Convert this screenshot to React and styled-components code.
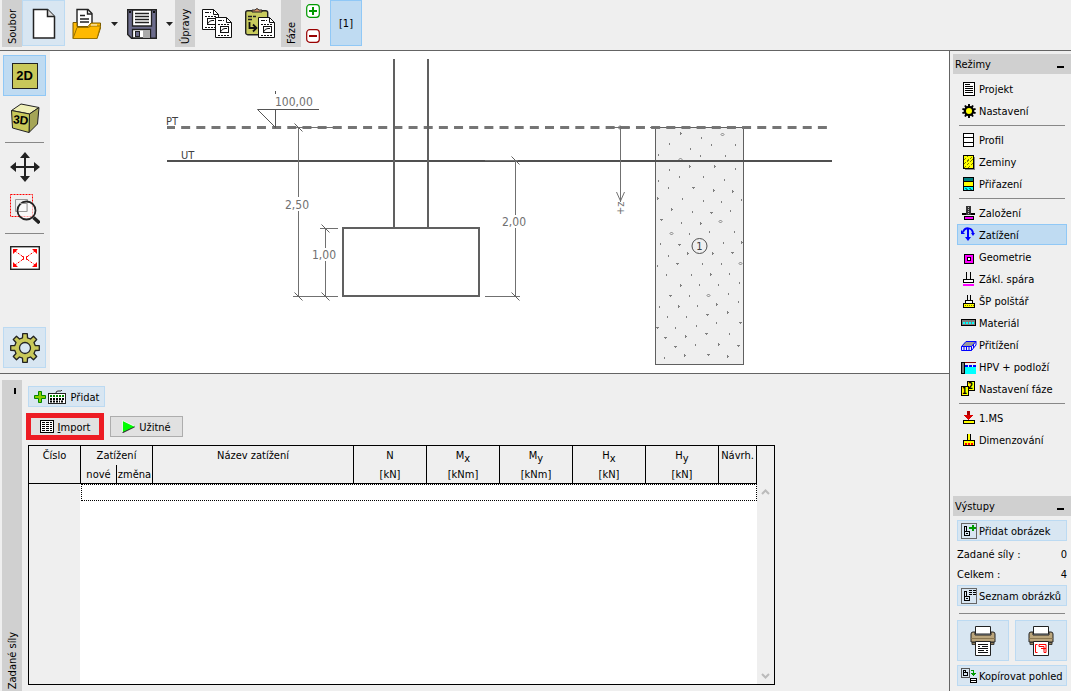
import { useState } from "react";
import styled, { createGlobalStyle, css } from "styled-components";

const GlobalStyle = createGlobalStyle`
  * {
    box-sizing: border-box;
  }
  body {
    margin: 0;
    background: #efefef;
    color: #000;
    font-family: "DejaVu Sans Condensed", "DejaVu Sans", sans-serif;
    font-size: 11px;
    line-height: 14px;
  }
  button {
    font: inherit;
    color: inherit;
    padding: 0;
    margin: 0;
    border: 1px solid transparent;
    background: transparent;
    cursor: pointer;
  }
  svg {
    display: block;
    flex: none;
  }
`;

/* ---------- icons ---------- */

const gearPoints = (cx, cy, outer, inner, teeth) => {
  const pts = [];
  const step = (Math.PI * 2) / teeth;
  for (let i = 0; i < teeth; i++) {
    const a = i * step - Math.PI / 2;
    [
      [-0.3, inner],
      [-0.2, outer],
      [0.2, outer],
      [0.3, inner],
    ].forEach(([k, r]) => {
      pts.push(
        `${(cx + r * Math.cos(a + k * step)).toFixed(1)},${(cy + r * Math.sin(a + k * step)).toFixed(1)}`
      );
    });
  }
  return pts.join(" ");
};

const NewIcon = () => (
  <svg width="30" height="34" viewBox="0 0 30 34">
    <path d="M4.500 2.500h14l7 7v21.500h-21z" fill="#fff" stroke="#222" strokeWidth="1.500" />
    <path d="M18.500 2.500v7h7" fill="#ddd" stroke="#222" strokeWidth="1.500" />
  </svg>
);

const OpenIcon = () => (
  <svg width="30" height="34" viewBox="0 0 30 34">
    <path d="M5 21V2.500h11l4 4V21z" fill="#fff" stroke="#222" strokeWidth="1.400" />
    <path d="M15.500 2.500v4.500h4.500M8 8.500h5M8 12h9M8 15h9" fill="none" stroke="#222" strokeWidth="1.400" />
    <path d="M1 31.500V15.500H5V19.500h11l3-3.500h9.500v5L25 31.500z" fill="#ffb900" stroke="#7a5b00" />
    <path d="M1 31.500L5 20.500h11l3-1.500h9.500L25 31.500z" fill="#ffb900" stroke="#9a7300" />
    <path d="M19 18h6" stroke="#fff" />
  </svg>
);

const SaveIcon = () => (
  <svg width="30" height="34" viewBox="0 0 30 34">
    <path d="M.700 2.700h28.600v28.600H4.500L.700 27.500z" fill="#6c6c8c" stroke="#222" strokeWidth="1.400" />
    <path d="M5.500 3v16h19V3z" fill="#fff" stroke="#222" strokeWidth="1.300" />
    <path d="M8 6.500h14M8 9.500h14M8 12.500h14M8 15.500h14" stroke="#222" strokeWidth="1.400" />
    <path d="M5.500 31v-8.500h18V31z" fill="#fff" stroke="#222" strokeWidth="1.300" />
    <rect x="16" y="23" width="7" height="8" fill="#aaa" />
    <rect x="8.500" y="24.500" width="4" height="5" fill="#6c6c8c" stroke="#222" />
    <path d="M2 5h2M26 5h2" stroke="#111" strokeWidth="2" />
  </svg>
);

const Sheet = ({ x, y }) => (
  <g transform={`translate(${x} ${y})`}>
    <path d="M.500.500h11l5 5v15h-16z" fill="#fff" stroke="#111" />
    <path d="M11.500.500v5h5" fill="none" stroke="#111" />
    <path d="M3 3.500h6" stroke="#111" strokeDasharray="4 1" />
    <path d="M3 7.500h11M3 18.500h11" stroke="#111" strokeDasharray="2 1" />
    <rect x="5.500" y="9.500" width="8" height="6" fill="#fff" stroke="#111" />
    <path d="M6 14.500q1-3 4-3h2" fill="none" stroke="#111" />
  </g>
);

const CopyIcon = () => (
  <svg width="30" height="34" viewBox="0 0 30 34">
    <Sheet x={0} y={2} />
    <Sheet x={13} y={10} />
  </svg>
);

const PasteIcon = () => (
  <svg width="30" height="34" viewBox="0 0 30 34">
    <rect x=".700" y="3.700" width="22" height="24" rx="2" fill="#c8cb5e" stroke="#222" strokeWidth="1.400" />
    <path d="M7 5V3h3q2-3 4 0h3v2z" fill="#d99163" stroke="#222" />
    <path d="M3 9.500h8M3 12.500h5" stroke="#222" strokeWidth="1.300" strokeDasharray="4 1" />
    <path d="M4.500 15v6h6M8 17.500l3.500 3.500L8 24.500" fill="none" stroke="#111" strokeWidth="1.800" />
    <Sheet x={13} y={10} />
  </svg>
);

const SignIcon = ({ color, plus }) => (
  <svg width="14" height="14" viewBox="0 0 14 14">
    <rect x=".700" y=".700" width="12.600" height="12.600" rx="3" fill="#fff" stroke={color} strokeWidth="1.200" />
    <path d={plus ? "M3 7h8M7 3v8" : "M3 7h8"} stroke={color} strokeWidth="2" />
  </svg>
);

const CaretIcon = () => (
  <svg width="7" height="4" viewBox="0 0 7 4">
    <path d="M0 0h7L3.500 4z" fill="#222" />
  </svg>
);

const CubeIcon = () => (
  <svg width="30" height="30" viewBox="0 0 30 30">
    <path d="M1.500 7.500L11 1l18 3.500L19.500 11z" fill="#f0f0b8" stroke="#222" />
    <path d="M19.500 11L29 4.500 27.500 21 19 29.500z" fill="#a5a556" stroke="#222" />
    <path d="M1.500 7.500l18 3.500-.5 18.500L2.500 25z" fill="#c8c85a" stroke="#222" />
    <text x="3" y="21" fontSize="12" fontWeight="bold" fontFamily="Liberation Sans, sans-serif" transform="rotate(6 10 18)">3D</text>
  </svg>
);

const MoveIcon = () => (
  <svg width="30" height="30" viewBox="0 0 30 30">
    <path d="M15 3v24M3 15h24" stroke="#222" strokeWidth="2" />
    <path d="M15 0l5 6H10zM15 30l5-6H10zM0 15l6-5v10zM30 15l-6-5v10z" fill="#222" />
  </svg>
);

const ZoomIcon = () => (
  <svg width="30" height="30" viewBox="0 0 30 30">
    <rect x=".500" y=".500" width="22" height="22" fill="none" stroke="#f00" strokeDasharray="2 1" />
    <path d="M5.500 5.500h12v12h-12z" fill="none" stroke="#999" />
    <circle cx="16.500" cy="16.500" r="9" fill="#fff" fillOpacity=".6" stroke="#222" strokeWidth="1.800" />
    <path d="M9 9.500h8v8H9" fill="none" stroke="#999" />
    <path d="M23.500 23.500l6 5.500" stroke="#222" strokeWidth="3.500" />
  </svg>
);

const FitIcon = () => (
  <svg width="30" height="24" viewBox="0 0 30 24">
    <rect x=".700" y=".700" width="28.600" height="22.600" fill="#fff" stroke="#222" strokeWidth="1.400" />
    <path d="M5 5l7 5M25 5l-7 5M5 19l7-5M25 19l-7-5" stroke="#f00" strokeDasharray="2 1.500" />
    <path d="M3 3h5L3 8zM27 3v5l-5-5zM3 21v-5l5 5zM27 21h-5l5-5z" fill="#f00" />
    <path d="M12 10.500h1.500v3H12M18 10.500h-1.500v3H18" fill="none" stroke="#f00" />
  </svg>
);

const GearIcon = () => (
  <svg width="30" height="30" viewBox="0 0 30 30">
    <polygon points={gearPoints(15, 15, 14.5, 10.5, 8)} fill="#c8c85a" stroke="#222" strokeWidth="1.3" strokeLinejoin="round" />
    <circle cx="15" cy="15" r="5.500" fill="#d8e6f2" stroke="#222" strokeWidth="1.300" />
  </svg>
);

// small 17x17 pictures for the mode list
const modeIcons = {
  project: (
    <>
      <rect x="3.500" y="2.500" width="11" height="13" fill="#fff" stroke="#000" />
      <path d="M5 4.500h5M5 6.500h8M5 8.500h8M5 10.500h8M5 12.500h8" stroke="#000" />
    </>
  ),
  settings: (
    <g shapeRendering="auto">
      <polygon points={gearPoints(9, 9, 7, 5.2, 10)} fill="#000" />
      <circle cx="9" cy="9" r="3" fill="#ff0" />
    </g>
  ),
  profile: (
    <>
      <rect x="3.500" y="2.500" width="10" height="13" fill="#fff" stroke="#000" />
      <path d="M3 6.500h11M3 11.500h11" stroke="#000" />
    </>
  ),
  soils: (
    <>
      <path d="M14.500 4v12.500H5" fill="none" stroke="#888" />
      <rect x="3.500" y="2.500" width="10" height="13" fill="#ff0" stroke="#000" />
      <path d="M4 7l4-4M4 11l9-8M4 15l9-9M8 15l5-5" stroke="#7a7a00" strokeDasharray="3 1" />
    </>
  ),
  assign: (
    <>
      <rect x="3.500" y="2.500" width="10" height="4" fill="#008080" stroke="#000" />
      <rect x="3.500" y="6.500" width="10" height="5" fill="#ff0" stroke="#000" />
      <rect x="3.500" y="11.500" width="10" height="4" fill="#0ff" stroke="#000" />
      <path d="M5 13l3 2M9 13l3 2" stroke="#088" />
    </>
  ),
  foundation: (
    <>
      <rect x="6" y="2" width="5" height="9" fill="#333" />
      <path d="M8.500 3v8" stroke="#bbb" strokeDasharray="1 1" />
      <path d="M2 10h4M11 10h4" stroke="#000" strokeWidth="2" />
      <rect x="4.500" y="12.500" width="9" height="3" fill="#f0f" stroke="#000" />
    </>
  ),
  load: (
    <g shapeRendering="auto" fill="none" stroke="#00f" strokeWidth="2">
      <path d="M3 6C5 1 12 1 13 7" />
      <path d="M8 2v11" />
      <path d="M1 4v4h4zM11 7h4l-2 3zM5 11h6l-3 4z" fill="#00f" stroke="none" />
    </g>
  ),
  geometry: (
    <>
      <rect x="4.500" y="6.500" width="9" height="9" fill="#f0f" stroke="#000" />
      <rect x="7.500" y="9.500" width="3" height="3" fill="#fff" stroke="#000" />
    </>
  ),
  base: (
    <>
      <path d="M6.500 2v8M10.500 2v8" stroke="#000" />
      <rect x="3.500" y="9.500" width="10" height="3" fill="#fff" stroke="#000" />
      <rect x="3" y="14" width="11" height="2" fill="#f0f" />
    </>
  ),
  cushion: (
    <>
      <path d="M7.500 3v5M10.500 3v5" stroke="#000" />
      <rect x="5.500" y="8.500" width="7" height="3" fill="#fff" stroke="#000" />
      <rect x="3.500" y="11.500" width="11" height="4" fill="#ff0" stroke="#000" />
      <path d="M5 13.500h9" stroke="#770" strokeDasharray="1 1" />
    </>
  ),
  material: (
    <>
      <rect x="1.500" y="5.500" width="14" height="6" fill="#808080" stroke="#000" />
      <path d="M3 9h11" stroke="#0ff" strokeWidth="2" strokeDasharray="2 1" />
    </>
  ),
  surcharge: (
    <g shapeRendering="auto" stroke="#00f">
      <path d="M1.500 10.500L6 5.500h10L11.500 10.500z" fill="#999" />
      <path d="M1.500 10.500v4h10v-4M11.500 14.500L16 9V5.500M4 10.500v4M6.500 10.500v4M9 10.500v4M13.500 8v4" fill="none" />
    </g>
  ),
  water: (
    <>
      <rect x="5" y="9" width="11" height="7" fill="#0ff" />
      <path d="M1 4.500h15" stroke="#800000" />
      <rect x="1.500" y="4.500" width="3" height="11" fill="#777" stroke="#000" />
      <path d="M5 8h11" stroke="#00f" strokeWidth="2" strokeDasharray="3 1" />
    </>
  ),
  stage: (
    <>
      <rect x="7.500" y="1.500" width="7" height="9" fill="#ff0" stroke="#000" />
      <rect x="1.500" y="6.500" width="7" height="9" fill="#ff0" stroke="#000" />
      <text x="2" y="14" fontSize="8" fontWeight="bold">1</text>
      <text x="8" y="9" fontSize="8" fontWeight="bold">2</text>
    </>
  ),
  capacity: (
    <>
      <path d="M8.500 2v6" stroke="#a00" strokeWidth="3" />
      <path d="M4 6h9L8.500 11z" fill="#d00" />
      <rect x="3.500" y="11.500" width="11" height="3" fill="#ff0" stroke="#000" />
    </>
  ),
  design: (
    <>
      <path d="M7.500 3v7M10.500 3v7" stroke="#000" />
      <rect x="8" y="3" width="2" height="7" fill="#ff0" />
      <rect x="3.500" y="9.500" width="11" height="5" fill="#ff0" stroke="#000" />
      <path d="M5 12.500h9" stroke="#f00" strokeWidth="2" strokeDasharray="2 1" />
    </>
  ),
};

const ModeIcon = ({ name }) => (
  <svg width="17" height="17" viewBox="0 0 17 17" shapeRendering="crispEdges">
    {modeIcons[name]}
  </svg>
);

const PictureIcon = ({ kind }) => (
  <svg width="17" height="17" viewBox="0 0 17 17" shapeRendering="crispEdges">
    {kind === "copy" ? (
      <>
        <rect x="1.500" y="1.500" width="8" height="9" fill="none" stroke="#555" />
        <path d="M3.500 3.500h2v2h2v3h-4zM3.500 5.500h2" fill="none" stroke="#000" />
        <path d="M11 3.500h2.500V8" fill="none" stroke="#090" />
        <path d="M11 6h5l-2.500 3z" fill="#090" />
        <rect x="10.500" y="11.500" width="6" height="4" fill="#fff" stroke="#000" />
        <path d="M10 13.500h6" stroke="#000" />
      </>
    ) : (
      <>
        <rect x="1.500" y="1.500" width="15" height="15" fill="none" stroke="#666" />
        <path d="M4.500 4.500h2v5h-2zM4.500 9.500h5v4h-5zM6 11.500h2" fill="none" stroke="#000" />
        {kind === "add" ? (
          <path d="M9 6h7M12.500 3v6" stroke="#090" strokeWidth="2" />
        ) : (
          <path d="M9 3.500h3m1 0h3M9 5.500h3m1 0h3M9 7.500h3m1 0h3" stroke="#000" />
        )}
      </>
    )}
  </svg>
);

const PrinterIcon = ({ drawing }) => (
  <svg width="26" height="32" viewBox="0 0 26 32">
    <path d="M5.500 9V1.500h15V9z" fill="#fff" stroke="#222" />
    <path d="M1 9q0-2 2-2h2v3h16V7h2q2 0 2 2v8H1z" fill="#baa57c" stroke="#222" />
    <path d="M1 13.500h24" stroke="#8a7650" />
    <path d="M2 17.500h22v2H2z" fill="#8f7c57" stroke="#222" strokeWidth=".8" />
    <path d="M5.500 16.500h15v14h-15z" fill="#fff" stroke="#222" />
    {drawing ? (
      <path d="M9.500 19.500h-2v8h2M11 19.500h7v8h-2v-4M11 19.500v2h5v3M13 23.500h5" fill="none" stroke="#f00" />
    ) : (
      <path d="M8 19.500h10M8 21.500h2m2 0h6M8 23.500h10M8 25.500h6m2 0h2M8 27.500h10" stroke="#111" />
    )}
  </svg>
);

const AddLoadIcon = () => (
  <svg width="33" height="17" viewBox="0 0 33 17">
    <path d="M4.500 3.500h3v4h4v3h-4v4h-3v-4h-4v-3h4z" fill="#8c0" stroke="#080" />
    <rect x="14.500" y="5.500" width="17" height="10" fill="#fff" stroke="#222" />
    <path d="M16 8h14" stroke="#080" strokeWidth="2" strokeDasharray="2 1" />
    <path d="M16 11h14M16 13.500h2m1 0h7m1 0h3" stroke="#000" strokeWidth="2" strokeDasharray="2 1" />
    <path d="M22 5q0-2 2-2h3l1-1" fill="none" stroke="#333" />
  </svg>
);

const GridIcon = () => (
  <svg width="14" height="13" viewBox="0 0 14 13" shapeRendering="crispEdges">
    <rect x=".500" y=".500" width="13" height="12" fill="#fff" stroke="#000" />
    <path d="M2 2.500h10M2 4.500h10M2 6.500h10M2 8.500h10M2 10.500h10" stroke="#000" strokeDasharray="3 1" />
  </svg>
);

const PlayIcon = () => (
  <svg width="13" height="13" viewBox="0 0 13 13">
    <path d="M.500 12.500L12.500 6.500" stroke="#333" strokeWidth="1.500" />
    <path d="M.500.500v11.500L12.500 6.500z" fill="#0f0" />
    <path d="M.500 12V.500L12 6" fill="none" stroke="#fff" strokeWidth=".8" />
  </svg>
);

const ScrollArrow = ({ down }) => (
  <svg width="9" height="6" viewBox="0 0 9 6">
    <path d={down ? "M1 1l3.500 3.500L8 1" : "M1 5l3.500-3.500L8 5"} fill="none" stroke="#bbb" strokeWidth="2" />
  </svg>
);

/* ---------- foundation drawing ---------- */

const ticks = [
  [701, 138], [669, 144], [711, 145], [735, 145], [690, 149], [658, 155], [700, 156], [725, 156],
  [669, 170], [735, 169], [679, 177], [703, 177], [724, 180], [658, 181], [668, 188], [682, 199],
  [703, 201], [721, 202], [741, 200], [692, 212], [730, 211], [681, 223], [689, 234], [709, 232],
  [734, 232], [660, 244], [723, 243], [668, 256], [657, 266], [702, 264], [721, 264], [666, 275],
  [691, 275], [729, 274], [699, 285], [718, 285], [739, 283], [689, 296], [728, 294], [738, 302],
  [659, 307], [697, 306], [667, 317], [686, 317], [716, 323], [675, 328], [696, 326], [729, 334],
  [695, 345], [664, 358],
];
const rights = [
  [681, 133], [690, 166], [715, 166], [714, 190], [733, 191], [658, 198], [672, 209], [701, 223],
  [688, 253], [713, 253], [742, 242], [711, 274], [681, 285], [717, 304], [679, 306], [728, 312],
  [686, 336], [719, 344], [685, 355], [728, 356],
];
const downs = [
  [693, 188], [711, 213], [661, 220], [679, 245], [732, 253], [677, 264], [670, 296], [707, 315],
  [740, 323], [657, 328], [706, 334], [665, 338], [675, 347], [738, 346], [708, 355],
];
const diamonds = [[722, 134], [680, 159], [720, 221], [671, 233], [740, 263], [708, 295]];

const Canvas = styled.svg`
  width: 100%;
  height: 100%;
  background: #fff;
  font-family: "DejaVu Sans Condensed", "DejaVu Sans", sans-serif;
  font-size: 12px;
`;

const Slash = ({ x, y }) => <path d={`M${x - 4} ${y - 4}l8 8`} stroke="#606060" />;

const FoundationDrawing = () => (
  <Canvas viewBox="50 51 899 322" preserveAspectRatio="xMinYMin meet" role="img" aria-label="Základ 2D">
    <rect x="655.500" y="127.500" width="88" height="237" fill="#efefef" stroke="#606060" />
    <g stroke="#808080" fill="none">
      {ticks.map(([x, y]) => (
        <path key={`${x}-${y}`} d={`M${x + 0.5} ${y - 1}v2`} />
      ))}
      {rights.map(([x, y]) => (
        <path key={`${x}-${y}`} d={`M${x - 0.5} ${y - 1}v3M${x} ${y + 0.5}h1`} />
      ))}
      {downs.map(([x, y]) => (
        <path key={`${x}-${y}`} d={`M${x - 1} ${y - 0.5}h3M${x + 0.5} ${y}v1`} />
      ))}
      {diamonds.map(([x, y]) => (
        <path key={`${x}-${y}`} d={`M${x + 0.5} ${y - 1}l1.500 1.500-1.500 1.500-1.500-1.500z`} />
      ))}
    </g>

    {/* terrain lines */}
    <path d="M167 127.500h660" stroke="#757575" strokeWidth="3" strokeDasharray="9 6.160" strokeDashoffset="1" />
    <path d="M167 161h665" stroke="#505050" strokeWidth="2" />

    {/* footing and column */}
    <path d="M394 59v168M428 59v168" stroke="#606060" strokeWidth="2" />
    <rect x="343" y="228" width="136" height="68" fill="#fff" stroke="#606060" strokeWidth="2" />

    <g stroke="#707070" fill="none">
      <path d="M298.500 127v70M298.500 211v86M293 127.500h40M293 296.500h45" />
      <path d="M325.500 228v20M325.500 261v36M320 228.500h18" />
      <path d="M515.500 160v55M515.500 228v69M485 160.500h33M485 296.500h35" />
      <path d="M620.500 126v76M616.500 192l4 9 4-9M610 127.500h20M650 127.500h8" />
      <circle cx="620" cy="127.500" r="1.500" />
    </g>
    <Slash x={298.5} y={127.500} />
    <Slash x={298.5} y={296.500} />
    <Slash x={325.5} y={228.500} />
    <Slash x={325.5} y={296.500} />
    <Slash x={515.5} y={160.500} />
    <Slash x={515.5} y={296.500} />
    <path d="M257.500 109.500H319M257.500 109.500l18 18v-18M275.500 91v3" stroke="#555" fill="none" />

    <g fill="#707070">
      <text x="275" y="106">100,00</text>
      <text x="285" y="209">2,50</text>
      <text x="312" y="259">1,00</text>
      <text x="502" y="226">2,00</text>
      <text x="166" y="125" fontSize="11" fill="#404040">PT</text>
      <text x="181" y="159" fontSize="11" fill="#404040">UT</text>
      <text transform="translate(624 215) rotate(-90)" fontSize="11">+z</text>
    </g>
    <circle cx="699.500" cy="246" r="7.500" fill="#efefef" stroke="#505050" />
    <text x="699.500" y="250" fontSize="11" textAnchor="middle" fill="#404040">1</text>
  </Canvas>
);

/* ---------- layout ---------- */

const Window = styled.div`
  display: grid;
  grid-template-rows: 51px minmax(0, 1fr);
  height: 100vh;
  overflow: hidden;
`;

const Toolbar = styled.header`
  display: flex;
  align-items: flex-start;
  padding-left: 2px;
  border-bottom: 1px solid #646464;
`;

const verticalText = css`
  width: 20px;
  line-height: 22px;
  writing-mode: vertical-rl;
  transform: rotate(180deg);
`;

const GroupLabel = styled.div`
  ${verticalText}
  height: 47px;
  padding-top: 3px;
  background: #d0d0d0;
`;

const ToolButton = styled.button`
  display: flex;
  align-items: center;
  justify-content: center;
  width: ${(p) => p.$width || 43}px;
  height: 46px;
  padding-top: 2px;
  ${(p) => p.$hot && "background: #d8e6f2; border-color: #bcdaf2;"}
  ${(p) => p.$active && "background: #bfdbf2; border-color: #90c8f6;"}
`;

const StageButtons = styled.div`
  display: flex;
  flex-direction: column;
  gap: 9px;
  width: 29px;
  padding: 3px 4px;

  button {
    width: 16px;
    height: 16px;
  }
`;

const Body = styled.div`
  display: grid;
  grid-template-columns: minmax(0, 1fr) 122px;
  min-height: 0;
`;

const Workspace = styled.main`
  display: grid;
  grid-template-rows: minmax(0, 1fr) 318px;
  min-height: 0;
`;

const ViewArea = styled.section`
  display: grid;
  grid-template-columns: 50px minmax(0, 1fr);
  min-height: 0;
`;

const ViewTools = styled.nav`
  display: flex;
  flex-direction: column;
  padding: 4px 4px 5px 3px;
`;

const ViewButton = styled.button`
  display: flex;
  align-items: center;
  justify-content: center;
  width: 43px;
  height: 41px;
  margin-bottom: 1px;
  ${(p) => p.$active && "background: #bfdbf2; border-color: #90c8f6;"}
  ${(p) => p.$hot && "background: #d8e6f2; border-color: #bcdaf2;"}
  ${(p) => p.$last && "margin-top: auto; margin-bottom: 0;"}
`;

const TwoD = styled.span`
  width: 26px;
  height: 26px;
  border: 1px solid #222;
  background: #c8c85a;
  font: bold 13px/24px "Liberation Sans", sans-serif;
`;

const Divider = styled.hr`
  width: ${(p) => p.$width || "auto"};
  height: 1px;
  margin: ${(p) => p.$margin || "4px 6px 3px"};
  border: 0;
  background: #888;
`;

const BottomPanel = styled.section`
  display: grid;
  grid-template-columns: 20px minmax(0, 1fr);
  gap: 4px;
  min-height: 0;
  padding: 6px 2px 0;
  border-top: 1px solid #646464;
`;

const PanelStrip = styled.div`
  display: flex;
  flex-direction: column;
  align-items: center;
  justify-content: space-between;
  padding: 5px 0 2px;
  background: #d0d0d0;
`;

const CollapseButton = styled.button`
  align-self: flex-end;
  width: 14px;
  height: 12px;

  &::before {
    content: "";
    display: block;
    width: 2px;
    height: 6px;
    margin: auto;
    background: #000;
  }
`;

const StripLabel = styled.span`
  ${verticalText}
`;

const PanelContent = styled.div`
  display: flex;
  flex-direction: column;
  align-items: flex-start;
  min-height: 0;
  padding: 6px 0;
`;

const ButtonRow = styled.div`
  display: flex;
  align-items: center;
  gap: 6px;
  margin: 6px 0 5px;
`;

const PanelButton = styled.button`
  display: flex;
  align-items: center;
  justify-content: center;
  gap: 4px;
  width: ${(p) => p.$width}px;
  height: 21px;
  padding-top: 2px;
  background: #e1e1e1;
  border-color: #adadad;
  ${(p) => p.$hot && "margin-left: 2px; background: #d8e6f2; border-color: #bcdaf2;"}
  ${(p) => p.$marked && "height: 27px; border: 5px solid #ed1c24;"}

  svg {
    margin-bottom: 2px;
  }
`;

const TableFrame = styled.div`
  display: flex;
  flex: 1;
  min-height: 0;
  margin-left: 2px;
  border: 1px solid #000;
  overflow: hidden;
`;

const LoadTable = styled.table`
  table-layout: fixed;
  width: 728px;
  height: 100%;
  border-collapse: separate;
  border-spacing: 0;

  th {
    height: 19px;
    padding: 2px 0 0;
    font-weight: normal;
    text-align: center;
    vertical-align: top;
    line-height: 16px;
    white-space: nowrap;
    border-right: 1px solid #000;
  }
  tr.units th {
    border-bottom: 1px solid #000;
  }
  td {
    padding: 0;
    background: #fff;
  }
  td.number {
    background: #efefef;
    border-right: 1px solid #fff;
  }
  td.current {
    height: 17px;
    border: 1px dotted #000;
  }
  sub {
    font-size: 11px;
    line-height: 0;
    vertical-align: -3px;
  }
`;

const ScrollTrack = styled.div`
  display: flex;
  flex-direction: column;
  justify-content: space-between;
  align-items: center;
  width: 17px;
  padding: 43px 0 5px;
`;

const Sidebar = styled.aside`
  display: flex;
  flex-direction: column;
  justify-content: space-between;
  padding: 3px 0 4px 3px;
  border-left: 1px solid #646464;
`;

const SideHeader = styled.header`
  display: flex;
  justify-content: space-between;
  height: 20px;
  margin-bottom: 4px;
  padding: 0 6px 0 2px;
  line-height: 21px;
  background: #d0d0d0;
`;

const Minimize = styled.button`
  width: 9px;

  &::before {
    content: "";
    display: block;
    height: 2px;
    margin-top: 5px;
    background: #000;
  }
`;

const SideButton = styled.button`
  display: flex;
  align-items: flex-start;
  gap: 2px;
  width: calc(100% - 8px);
  height: 21px;
  margin: 0 4px 1px;
  padding-left: 2px;
  line-height: 21px;
  white-space: nowrap;
  text-align: left;
  ${(p) => p.$hot && "background: #d8e6f2; border-color: #bcdaf2;"}
  ${(p) => p.$active && "background: #bfdbf2; border-color: #90c8f6;"}

  svg {
    margin-top: 1px;
  }
`;

const CountRow = styled.div`
  display: flex;
  justify-content: space-between;
  padding: 0 4px;
  line-height: 20px;
`;

const Counts = styled.div`
  padding-top: 3px;
`;

const PrintRow = styled.div`
  display: grid;
  grid-template-columns: 1fr 1fr;
  gap: 6px;
  margin: 6px 4px 4px;
`;

const PrintButton = styled.button`
  display: flex;
  align-items: center;
  justify-content: center;
  height: 41px;
  background: #d8e6f2;
  border-color: #bcdaf2;
`;

const modeGroups = [
  [
    ["project", "Projekt"],
    ["settings", "Nastavení"],
  ],
  [
    ["profile", "Profil"],
    ["soils", "Zeminy"],
    ["assign", "Přiřazení"],
  ],
  [
    ["foundation", "Založení"],
    ["load", "Zatížení"],
    ["geometry", "Geometrie"],
    ["base", "Zákl. spára"],
    ["cushion", "ŠP polštář"],
    ["material", "Materiál"],
    ["surcharge", "Přitížení"],
    ["water", "HPV + podloží"],
    ["stage", "Nastavení fáze"],
  ],
  [
    ["capacity", "1.MS"],
    ["design", "Dimenzování"],
  ],
];

const forces = [
  ["N", "", "[kN]"],
  ["M", "x", "[kNm]"],
  ["M", "y", "[kNm]"],
  ["H", "x", "[kN]"],
  ["H", "y", "[kN]"],
];

const TopBar = () => (
  <Toolbar>
    <GroupLabel>Soubor</GroupLabel>
    <ToolButton $hot aria-label="Nový"><NewIcon /></ToolButton>
    <ToolButton aria-label="Otevřít"><OpenIcon /></ToolButton>
    <ToolButton $width={12} aria-label="Poslední soubory"><CaretIcon /></ToolButton>
    <ToolButton aria-label="Uložit"><SaveIcon /></ToolButton>
    <ToolButton $width={12} aria-label="Uložit jako"><CaretIcon /></ToolButton>
    <GroupLabel>Úpravy</GroupLabel>
    <ToolButton aria-label="Kopírovat"><CopyIcon /></ToolButton>
    <ToolButton aria-label="Vložit"><PasteIcon /></ToolButton>
    <GroupLabel>Fáze</GroupLabel>
    <StageButtons>
      <button aria-label="Přidat fázi"><SignIcon color="#090" plus /></button>
      <button aria-label="Odebrat fázi"><SignIcon color="#900" /></button>
    </StageButtons>
    <ToolButton $active $width={32}>[1]</ToolButton>
  </Toolbar>
);

const LoadsPanel = () => (
  <BottomPanel>
    <PanelStrip>
      <CollapseButton aria-label="Skrýt panel" />
      <StripLabel>Zadané síly</StripLabel>
    </PanelStrip>
    <PanelContent>
      <PanelButton $hot $width={77}>
        <AddLoadIcon />
        Přidat
      </PanelButton>
      <ButtonRow>
        <PanelButton $marked $width={78}>
          <GridIcon />
          <span><u>I</u>mport</span>
        </PanelButton>
        <PanelButton $width={73}>
          <PlayIcon />
          Užitné
        </PanelButton>
      </ButtonRow>
      <TableFrame>
        <LoadTable>
          <colgroup>
            <col width="52" />
            <col width="36" />
            <col width="36" />
            <col width="201" />
            {forces.map(([n, s]) => (
              <col key={n + s} width="73" />
            ))}
            <col width="38" />
          </colgroup>
          <thead>
            <tr>
              <th>Číslo</th>
              <th colSpan="2">Zatížení</th>
              <th>Název zatížení</th>
              {forces.map(([name, sub]) => (
                <th key={name + sub}>
                  {name}
                  {sub && <sub>{sub}</sub>}
                </th>
              ))}
              <th>Návrh.</th>
            </tr>
            <tr className="units">
              <th />
              <th>nové</th>
              <th>změna</th>
              <th />
              {forces.map(([name, sub, unit]) => (
                <th key={name + sub}>{unit}</th>
              ))}
              <th />
            </tr>
          </thead>
          <tbody>
            <tr>
              <td className="number" />
              <td className="current" colSpan="9" />
            </tr>
            <tr>
              <td className="number" />
              <td colSpan="9" />
            </tr>
          </tbody>
        </LoadTable>
        <ScrollTrack>
          <ScrollArrow />
          <ScrollArrow down />
        </ScrollTrack>
      </TableFrame>
    </PanelContent>
  </BottomPanel>
);

const Modes = () => {
  const [mode, setMode] = useState("load");

  return (
    <nav>
      <SideHeader>
        Režimy
        <Minimize aria-label="Skrýt režimy" />
      </SideHeader>
      {modeGroups.map((group, i) => (
        <div key={i}>
          {i > 0 && <Divider />}
          {group.map(([id, label]) => (
            <SideButton key={id} $active={mode === id} onClick={() => setMode(id)}>
              <ModeIcon name={id} />
              {label}
            </SideButton>
          ))}
        </div>
      ))}
    </nav>
  );
};

const Outputs = () => (
  <section>
    <SideHeader>
      Výstupy
      <Minimize aria-label="Skrýt výstupy" />
    </SideHeader>
    <SideButton $hot><PictureIcon kind="add" />Přidat obrázek</SideButton>
    <Counts>
      <CountRow><span>Zadané síly :</span><span>0</span></CountRow>
      <CountRow><span>Celkem :</span><span>4</span></CountRow>
    </Counts>
    <SideButton $hot><PictureIcon kind="list" />Seznam obrázků</SideButton>
    <Divider $margin="7px 6px 0" />
    <PrintRow>
      <PrintButton aria-label="Tisk protokolu"><PrinterIcon /></PrintButton>
      <PrintButton aria-label="Tisk obrázku"><PrinterIcon drawing /></PrintButton>
    </PrintRow>
    <SideButton $hot><PictureIcon kind="copy" />Kopírovat pohled</SideButton>
  </section>
);

const App = () => {
  return (
    <Window>
      <GlobalStyle />
      <TopBar />
      <Body>
        <Workspace>
          <ViewArea>
            <ViewTools>
              <ViewButton $active><TwoD>2D</TwoD></ViewButton>
              <ViewButton aria-label="3D"><CubeIcon /></ViewButton>
              <Divider $width="39px" $margin="3px 2px" />
              <ViewButton aria-label="Posun"><MoveIcon /></ViewButton>
              <ViewButton aria-label="Zvětšit výřez"><ZoomIcon /></ViewButton>
              <Divider $width="39px" $margin="3px 2px" />
              <ViewButton aria-label="Zobrazit vše"><FitIcon /></ViewButton>
              <ViewButton $hot $last aria-label="Nastavení kreslení"><GearIcon /></ViewButton>
            </ViewTools>
            <FoundationDrawing />
          </ViewArea>
          <LoadsPanel />
        </Workspace>
        <Sidebar>
          <Modes />
          <Outputs />
        </Sidebar>
      </Body>
    </Window>
  );
};

export default App;
